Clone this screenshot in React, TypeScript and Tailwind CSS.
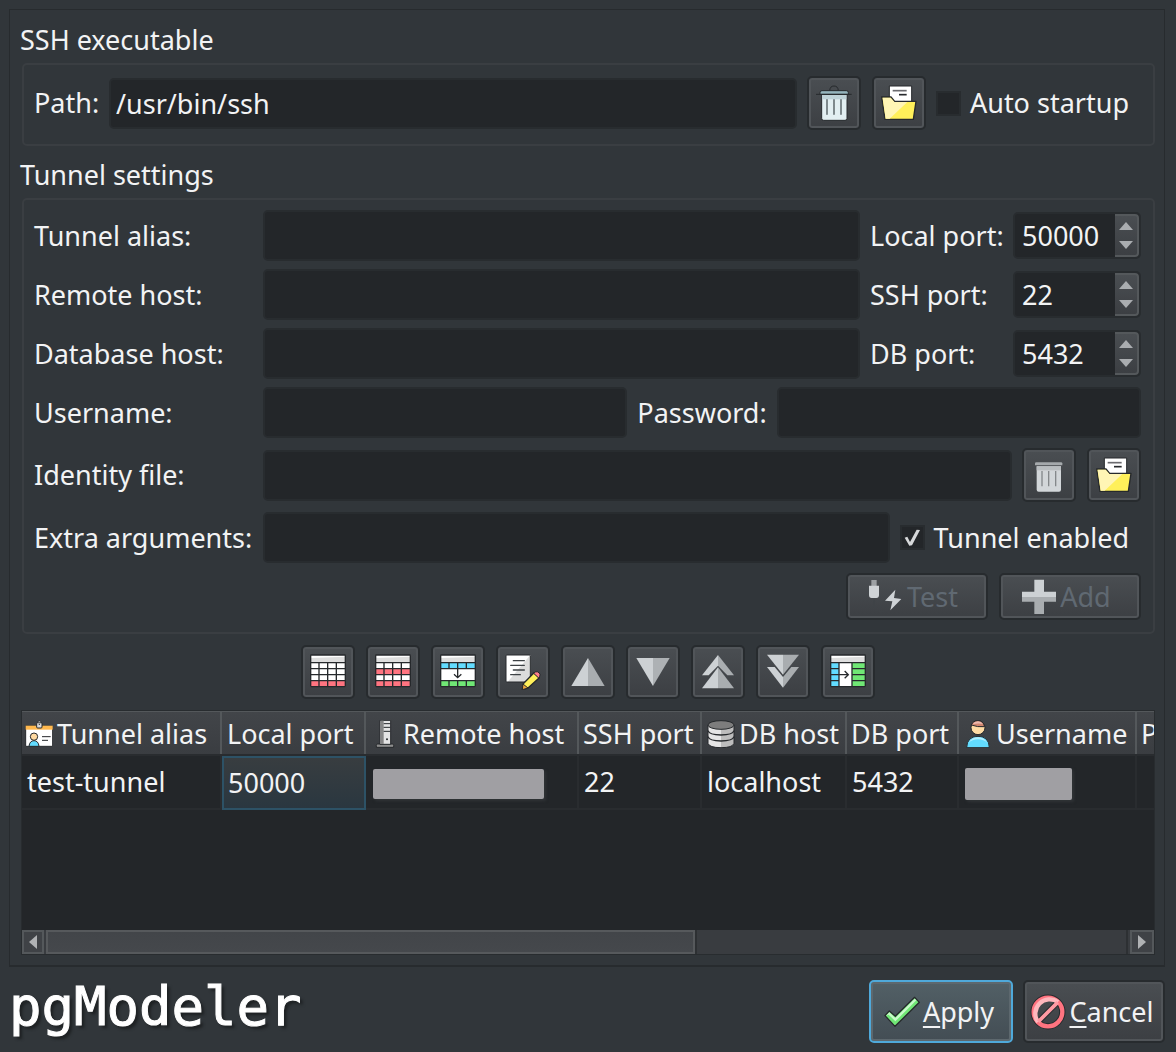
import type { ButtonHTMLAttributes, ReactNode } from "react";
import { clsx } from "clsx";

const DARK = "#26292c";

/* ---------- icons ---------- */

interface IconProps {
  children: ReactNode;
}

function Icon({ children }: IconProps) {
  return (
    <svg viewBox="0 0 108 108" className="size-9 shrink-0" aria-hidden="true">
      {children}
    </svg>
  );
}

function HeaderIcon({ children }: IconProps) {
  return (
    <svg viewBox="0 0 84 84" className="size-7 shrink-0" aria-hidden="true">
      {children}
    </svg>
  );
}

function TrashIcon({ disabled = false }: { disabled?: boolean }) {
  if (disabled) {
    return (
      <Icon>
        <path d="M12 25V19q0-3 4-3H90q4 0 4 3v6z" fill="#a5a9ac" />
        <path d="M17 28H90V98q0 6-6 6H23q-6 0-6-6z" fill="#d2d6d9" />
        <path d="M17 28H90V40H17z" fill="#b9bdc0" />
        <path d="M33 42V88M53 42V88M74 42V88" stroke="#84888b" strokeWidth="4" />
      </Icon>
    );
  }
  return (
    <Icon>
      <path d="M41 17q1-14 13-14t13 14" fill="none" stroke={DARK} strokeWidth="3" />
      <path d="M17 28H93V100q0 6-6 6H23q-6 0-6-6z" fill="#e2eff2" stroke={DARK} strokeWidth="3" />
      <path d="M19 29H91V43H19z" fill="#bfd3d8" />
      <path d="M12 28V23q0-6 6-6H91q6 0 6 6v5z" fill="#95b5bd" stroke={DARK} strokeWidth="3" />
      <path d="M0 28H107" stroke={DARK} strokeWidth="3" />
      <path d="M33 44V88M54 44V88M75 44V88" stroke="#4d575b" strokeWidth="4" strokeLinecap="round" />
    </Icon>
  );
}

function FolderIcon() {
  return (
    <Icon>
      <path d="M25 3H92V60H25z" fill="#fff" stroke={DARK} strokeWidth="3" />
      <path d="M35 17H77" stroke="#6b6b6f" strokeWidth="5" />
      <path d="M54 29H77" stroke={DARK} strokeWidth="5" />
      <path d="M2 36H30L41 49H105L97 103H12z" fill="#fff05a" stroke={DARK} strokeWidth="4" strokeLinejoin="round" />
      <path d="M5 38H29L40 51H79L26 101H14z" fill="#fff5b5" />
    </Icon>
  );
}

const GRID_LINES = "M2 26H106M2 44H106M2 62H106M2 80H106M27 26V98M53 26V98M79 26V98";

function TableFrame({ children, lines = GRID_LINES }: { children?: ReactNode; lines?: string }) {
  return (
    <Icon>
      <path d="M2 3H106V98H2z" fill="#fff" />
      <path d="M2 24V12L106 8V24z" fill="#dedede" />
      {children}
      <path d={lines} stroke={DARK} strokeWidth="4" fill="none" />
      <rect x="2" y="3" width="104" height="95" rx="2" fill="none" stroke={DARK} strokeWidth="4" />
    </Icon>
  );
}

function TableRemoveAllIcon() {
  return (
    <TableFrame>
      <path d="M2 80H106V98H2z" fill="#ff7480" />
    </TableFrame>
  );
}

function TableRemoveRowsIcon() {
  return (
    <TableFrame>
      <path d="M2 44H106V62H2zM2 80H106V98H2z" fill="#ff7480" />
    </TableFrame>
  );
}

function TableDuplicateIcon() {
  return (
    <TableFrame lines="M2 26H106M2 44H106M2 80H106M27 26V44M53 26V44M79 26V44M27 80V98M53 80V98M79 80V98M53 44V70M42 61L53 71L64 61">
      <path d="M2 26H106V44H2z" fill="#62dcff" />
      <path d="M2 80H106V98H2z" fill="#70e775" />
    </TableFrame>
  );
}

function TableColumnsIcon() {
  return (
    <TableFrame lines="M2 26H106M27 26V98M66 26V98M2 44H27M2 62H54M2 80H27M66 44H106M66 62H106M66 80H106M44 51L55 62L44 73">
      <path d="M2 26H27V98H2z" fill="#62dcff" />
      <path d="M66 26H106V98H66z" fill="#70e775" />
    </TableFrame>
  );
}

function EditIcon() {
  return (
    <Icon>
      <path d="M3 3H76V84H3z" fill="#fff" />
      <path d="M76 3V84H8z" fill="#dcdcdc" />
      <rect x="3" y="3" width="73" height="81" rx="3" fill="none" stroke={DARK} strokeWidth="3" />
      <path d="M25 20H58M17 34H58M25 48H58M17 62H46" stroke="#3e4246" strokeWidth="4" strokeLinecap="round" />
      <path d="M54 90L87 56L103 71L69 102L52 107z" fill="#fff05a" stroke={DARK} strokeWidth="4" strokeLinejoin="round" />
      <path d="M54 90L69 102L52 107z" fill="#f0a63c" stroke={DARK} strokeWidth="3" strokeLinejoin="round" />
      <path d="M86 58L91 54q6-3 12 3q4 5 1 10L101 72z" fill="#ff7f8a" stroke={DARK} strokeWidth="3" />
    </Icon>
  );
}

function UpIcon() {
  return (
    <Icon>
      <path d="M54 12L4 96H54z" fill="#cdd1d4" />
      <path d="M54 12L104 96H54z" fill="#a9adb0" />
    </Icon>
  );
}

function DownIcon() {
  return (
    <Icon>
      <path d="M4 12H54V96z" fill="#cdd1d4" />
      <path d="M54 12H104L54 96z" fill="#adb1b4" />
    </Icon>
  );
}

function FirstIcon() {
  return (
    <Icon>
      <path d="M54 3L6 64H26L54 35z" fill="#cdd1d4" />
      <path d="M54 3L102 64H82L54 35z" fill="#a9adb0" />
      <path d="M54 40L6 103H54z" fill="#cdd1d4" />
      <path d="M54 40L102 103H54z" fill="#a9adb0" />
    </Icon>
  );
}

function LastIcon() {
  return (
    <Icon>
      <path d="M6 2H54V62z" fill="#cdd1d4" />
      <path d="M54 2H102L54 62z" fill="#a9adb0" />
      <path d="M6 39H29L54 69V101z" fill="#cdd1d4" />
      <path d="M102 39H79L54 69V101z" fill="#a9adb0" />
    </Icon>
  );
}

function TestIcon() {
  return (
    <Icon>
      <path d="M10 3H26V21H10z" fill="#9da1a4" />
      <path d="M3 20H33V48q0 9-8 9H11q-8 0-8-9z" fill="#cfd3d6" />
      <path d="M18 60V76Q18 98 40 97T62 84" stroke="#3f4347" strokeWidth="3" fill="none" />
      <path d="M82 32L51 65L73 67L67 94L100 60L78 57z" fill="#cfd3d6" />
    </Icon>
  );
}

function AddIcon() {
  return (
    <Icon>
      <path d="M40 2H69V38H105V54H3V38H40z" fill="#cdd1d4" />
      <path d="M3 54H105V68H69V105H40V68H3z" fill="#a9adb0" />
    </Icon>
  );
}

function ApplyIcon() {
  return (
    <Icon>
      <path d="M3 65L16 51L34 67L92 10L106 25L33 97z" fill="#70e775" stroke={DARK} strokeWidth="4" strokeLinejoin="round" />
      <path d="M6 65L16 55L34 72L92 14L97 19L34 82L14 62z" fill="#c9f9ca" />
    </Icon>
  );
}

function CancelIcon() {
  return (
    <Icon>
      <circle cx="54" cy="54" r="43" fill="none" stroke={DARK} strokeWidth="19" />
      <path d="M25 83L83 25" stroke={DARK} strokeWidth="17" />
      <circle cx="54" cy="54" r="43" fill="none" stroke="#ff7480" strokeWidth="13" />
      <path d="M24 84A43 43 0 0 1 84 24" fill="none" stroke="#ffb7bd" strokeWidth="13" />
      <path d="M25 83L83 25" stroke="#ff9aa3" strokeWidth="11" />
    </Icon>
  );
}

function BadgeIcon() {
  return (
    <HeaderIcon>
      <path d="M2 17H83V79H2z" fill="#fff" stroke={DARK} strokeWidth="3" />
      <path d="M2 17H83V29H2z" fill="#ffb84d" />
      <rect x="35" y="8" width="16" height="16" rx="3" fill="#d9d9d9" stroke={DARK} strokeWidth="3" />
      <path d="M38 8q0-5 5-5t5 5z" fill="#d9d9d9" stroke={DARK} strokeWidth="2" />
      <circle cx="43" cy="13" r="2" fill={DARK} />
      <path d="M12 79q2-17 15-17t15 17z" fill="#62dcff" stroke={DARK} strokeWidth="3" />
      <circle cx="27" cy="50" r="11" fill="#ffd9a0" stroke={DARK} strokeWidth="3" />
      <path d="M51 50H77M51 61H69" stroke={DARK} strokeWidth="3" />
    </HeaderIcon>
  );
}

function ServerIcon() {
  return (
    <HeaderIcon>
      <path d="M16 82V76q0-4 4-4H64q4 0 4 4v6z" fill="#8d8d8d" stroke={DARK} strokeWidth="3" />
      <path d="M27 1H59V73H27z" fill="#e4e4e4" stroke={DARK} strokeWidth="3" />
      <path d="M28 2H38V72H28z" fill="#858585" />
      <path d="M38 11H58M38 22H58M38 34H58" stroke={DARK} strokeWidth="3" />
      <circle cx="48" cy="58" r="3" fill={DARK} />
    </HeaderIcon>
  );
}

function DatabaseIcon() {
  return (
    <HeaderIcon>
      <path d="M3 15V70q4 13 39 13t39-13V15z" fill="#e6e6e6" />
      <path d="M42 15H81V70q-4 13-39 13z" fill="#bdbdbd" />
      <path d="M3 32q4 13 39 13t39-13M3 50q4 13 39 13t39-13" fill="none" stroke={DARK} strokeWidth="4" />
      <path d="M3 15V70q4 13 39 13t39-13V15" fill="none" stroke={DARK} strokeWidth="3" />
      <ellipse cx="42" cy="15" rx="39" ry="13" fill="#7d7d7d" stroke={DARK} strokeWidth="3" />
    </HeaderIcon>
  );
}

function UserIcon() {
  return (
    <HeaderIcon>
      <path d="M8 83q1-34 34-34t34 34z" fill="#62dcff" stroke={DARK} strokeWidth="3" />
      <path d="M14 69q8-17 28-17t28 17q-10-11-28-11t-28 11z" fill="#b4efff" />
      <circle cx="42" cy="23" r="21" fill="#ffdca4" stroke={DARK} strokeWidth="3" />
      <path d="M22 15q5-13 20-13t20 18q-22 2-40-5z" fill="#d0866f" stroke={DARK} strokeWidth="3" />
      <path d="M26 13q6-9 16-9t15 8q-14-4-31 1z" fill="#edb9ae" />
    </HeaderIcon>
  );
}

/* ---------- controls ---------- */

interface PushButtonProps extends ButtonHTMLAttributes<HTMLButtonElement> {
  className?: string;
}

function PushButton({ className, children, ...props }: PushButtonProps) {
  return (
    <button
      type="button"
      className={clsx(
        "flex shrink-0 items-center justify-center gap-[3px] rounded-[5px] border-2 border-[#272b2e] bg-linear-to-b from-[#4a4e52] to-[#3c3f43] inset-ring-2 inset-ring-[#515559] disabled:text-[#606972]",
        className
      )}
      {...props}
    >
      {children}
    </button>
  );
}

function IconButton({ label, children, disabled }: { label: string; children: ReactNode; disabled?: boolean }) {
  return (
    <PushButton aria-label={label} disabled={disabled} className="size-[54px]">
      {children}
    </PushButton>
  );
}

interface TextFieldProps {
  id: string;
  value?: string;
  type?: string;
}

function TextField({ id, value = "", type = "text" }: TextFieldProps) {
  return (
    <input
      id={id}
      type={type}
      defaultValue={value}
      className="h-[51px] min-w-0 flex-1 rounded-[5px] border-2 border-[#282c2f] bg-[#232629] px-[5px] outline-none"
    />
  );
}

function PortField({ id, label, value }: { id: string; label: string; value: string }) {
  return (
    <>
      <label htmlFor={id} className="w-[133px] shrink-0 whitespace-nowrap">
        {label}
      </label>
      <div className="flex h-[47px] w-[128px] shrink-0 rounded-[5px] border-2 border-[#282c2f] bg-[#232629]">
        <input
          id={id}
          inputMode="numeric"
          defaultValue={value}
          className="w-[100px] min-w-0 bg-transparent pl-[7px] outline-none"
        />
        <div className="flex flex-1 flex-col rounded-r-[4px] border-2 border-l-0 border-[#54585b] bg-linear-to-b from-[#4a4e52] to-[#3c3f43]">
          <button type="button" aria-label={`Increase ${id}`} className="flex flex-1 items-center justify-center">
            <svg viewBox="0 0 14 8" className="h-2 w-[14px]" aria-hidden="true">
              <path d="M7 0L14 8H0z" fill="#aaadb0" />
            </svg>
          </button>
          <button type="button" aria-label={`Decrease ${id}`} className="flex flex-1 items-center justify-center">
            <svg viewBox="0 0 14 8" className="h-2 w-[14px]" aria-hidden="true">
              <path d="M7 8L0 0H14z" fill="#aaadb0" />
            </svg>
          </button>
        </div>
      </div>
    </>
  );
}

function CheckField({ label, checked = false }: { label: string; checked?: boolean }) {
  return (
    <label className="flex shrink-0 items-center gap-[9px] pr-3 whitespace-nowrap">
      <span className="grid size-[25px]">
        <input
          type="checkbox"
          defaultChecked={checked}
          className="peer col-start-1 row-start-1 size-[25px] appearance-none border-2 border-[#282c2f] bg-[#232629]"
        />
        <svg
          viewBox="0 0 75 75"
          className="pointer-events-none col-start-1 row-start-1 hidden size-[25px] peer-checked:block"
          aria-hidden="true"
        >
          <path d="M14 38L22 35L30 51L50 14L60 15L36 61L28 62z" fill="#d6d8da" />
        </svg>
      </span>
      {label}
    </label>
  );
}

function GroupBox({ title, children, className }: { title: string; children: ReactNode; className?: string }) {
  return (
    <fieldset className="min-w-0">
      <legend className="h-[42px] leading-[38px]">{title}</legend>
      <div className={clsx("ml-[2px] rounded-[5px] border-2 border-[#3a3e42] pr-[12px] pl-[10px]", className)}>
        {children}
      </div>
    </fieldset>
  );
}

/* ---------- tunnel list ---------- */

const columns = [
  { name: "Tunnel alias", width: 200, icon: <BadgeIcon />, pad: "pl-[3px]" },
  { name: "Local port", width: 144, pad: "pl-[5px]" },
  { name: "Remote host", width: 213, icon: <ServerIcon />, pad: "pl-[5px]" },
  { name: "SSH port", width: 123, pad: "pl-[4px]" },
  { name: "DB host", width: 145, icon: <DatabaseIcon />, pad: "pl-[5px]" },
  { name: "DB port", width: 112, pad: "pl-[4px]" },
  { name: "Username", width: 178, icon: <UserIcon />, pad: "pl-[5px]" },
  { name: "Password", width: 150, pad: "pl-[4px]" },
];

const cellClass = "h-[54px] border-r-2 border-b-2 border-[#292c2f] pl-[5px]";

function TunnelTable() {
  return (
    <div className="ml-px flex min-h-[245px] flex-1 flex-col border border-[#282c2f] bg-[#232629]">
      <div className="flex-1 overflow-hidden">
        <table className="w-[1265px] table-fixed border-separate border-spacing-0 text-left">
          <colgroup>
            {columns.map((column) => (
              <col key={column.name} style={{ width: column.width }} />
            ))}
          </colgroup>
          <thead>
            <tr>
              {columns.map((column) => (
                <th key={column.name} className="border-b-2 border-[#292c2f] p-0 font-normal whitespace-nowrap">
                  <div
                    className={clsx(
                      "flex h-[43px] items-center gap-1 border-t border-r-2 border-[#54585b] bg-linear-to-b from-[#424549] to-[#3a3d41] pt-px",
                      column.pad
                    )}
                  >
                    {column.icon}
                    {column.name}
                  </div>
                </th>
              ))}
            </tr>
          </thead>
          <tbody>
            <tr>
              <td className={cellClass}>test-tunnel</td>
              <td className="h-[54px] border-2 border-[#2d5266] bg-linear-to-b from-[#383d40] to-[#2a3740] pl-[4px]">
                50000
              </td>
              <td className={cellClass}>
                <div className="mt-1 ml-[2px] h-[30px] w-[171px] rounded-xs bg-[#a09fa3] shadow-[2px_2px_3px_#303336]" />
              </td>
              <td className={cellClass}>22</td>
              <td className={cellClass}>localhost</td>
              <td className={cellClass}>5432</td>
              <td className={cellClass}>
                <div className="mt-1 ml-px h-8 w-[107px] rounded-xs bg-[#a09fa3] shadow-[2px_2px_3px_#303336]" />
              </td>
              <td className={cellClass} />
            </tr>
          </tbody>
        </table>
      </div>

      {/* horizontal scroll bar */}
      <div className="flex h-6 gap-[2px] bg-[#393c40]">
        <button
          type="button"
          aria-label="Scroll left"
          className="flex w-[22px] items-center justify-center border-2 border-[#54585b] bg-[#3f4246]"
        >
          <svg viewBox="0 0 8 14" className="h-[14px] w-2" aria-hidden="true">
            <path d="M0 7L8 0V14z" fill="#b0b2b4" />
          </svg>
        </button>
        <div className="flex flex-1">
          <div className="w-[60%] border-2 border-[#56595c] bg-linear-to-b from-[#424549] to-[#45484c]" />
          <div className="flex-1 border-x-2 border-[#2d3033]" />
        </div>
        <button
          type="button"
          aria-label="Scroll right"
          className="flex w-6 items-center justify-center border-2 border-[#54585b] bg-[#3f4246]"
        >
          <svg viewBox="0 0 8 14" className="h-[14px] w-2" aria-hidden="true">
            <path d="M8 7L0 0V14z" fill="#b0b2b4" />
          </svg>
        </button>
      </div>
    </div>
  );
}

/* ---------- page ---------- */

export default function App() {
  return (
    <div className="flex min-h-screen flex-col bg-[#31363a] pt-[9px] pr-[11px] pb-[10px] pl-[9px] font-['Noto_Sans',sans-serif] text-[27px] leading-[38px] text-[#f2f3f4]">
      <main className="flex flex-1 flex-col border border-b-2 border-[#272b2e] pt-[11px] pr-[9px] pb-[10px] pl-[10px]">
        <GroupBox title="SSH executable" className="h-[83px] pt-[11px]">
          <div className="flex items-center">
            <label htmlFor="path" className="w-[75px] shrink-0">
              Path:
            </label>
            <TextField id="path" value="/usr/bin/ssh" />
            <div className="mx-[10px] flex gap-[11px]">
              <IconButton label="Clear path">
                <TrashIcon />
              </IconButton>
              <IconButton label="Select executable">
                <FolderIcon />
              </IconButton>
            </div>
            <CheckField label="Auto startup" />
          </div>
        </GroupBox>

        <div className="mt-[10px]">
          <GroupBox title="Tunnel settings" className="flex flex-col gap-[10px] pt-[10px] pb-[12px]">
            <div className="flex flex-col gap-[8px]">
              <div className="flex items-center gap-[10px]">
                <label htmlFor="alias" className="w-[219px] shrink-0">
                  Tunnel alias:
                </label>
                <TextField id="alias" />
                <PortField id="local-port" label="Local port:" value="50000" />
              </div>
              <div className="flex items-center gap-[10px]">
                <label htmlFor="remote-host" className="w-[219px] shrink-0">
                  Remote host:
                </label>
                <TextField id="remote-host" />
                <PortField id="ssh-port" label="SSH port:" value="22" />
              </div>
              <div className="flex items-center gap-[10px]">
                <label htmlFor="db-host" className="w-[219px] shrink-0">
                  Database host:
                </label>
                <TextField id="db-host" />
                <PortField id="db-port" label="DB port:" value="5432" />
              </div>
              <div className="flex items-center gap-[10px]">
                <label htmlFor="username" className="w-[219px] shrink-0">
                  Username:
                </label>
                <TextField id="username" />
                <label htmlFor="password">Password:</label>
                <TextField id="password" type="password" />
              </div>
            </div>

            <div className="flex items-center gap-[10px]">
              <label htmlFor="identity" className="w-[219px] shrink-0">
                Identity file:
              </label>
              <TextField id="identity" />
              <div className="flex gap-[11px]">
                <IconButton label="Clear identity file" disabled>
                  <TrashIcon disabled />
                </IconButton>
                <IconButton label="Select identity file">
                  <FolderIcon />
                </IconButton>
              </div>
            </div>

            <div className="flex items-center gap-[10px]">
              <label htmlFor="extra" className="w-[219px] shrink-0 whitespace-nowrap">
                Extra arguments:
              </label>
              <TextField id="extra" />
              <CheckField label="Tunnel enabled" checked />
            </div>

            <div className="flex justify-end gap-[11px]">
              <PushButton className="h-[47px] w-[142px] pr-2" disabled>
                <TestIcon />
                Test
              </PushButton>
              <PushButton className="h-[47px] w-[142px] pr-2" disabled>
                <AddIcon />
                Add
              </PushButton>
            </div>
          </GroupBox>
        </div>

        <div className="my-[11px] flex justify-center gap-[11px]">
          <IconButton label="Remove all tunnels">
            <TableRemoveAllIcon />
          </IconButton>
          <IconButton label="Remove tunnel">
            <TableRemoveRowsIcon />
          </IconButton>
          <IconButton label="Duplicate tunnel">
            <TableDuplicateIcon />
          </IconButton>
          <IconButton label="Edit tunnel">
            <EditIcon />
          </IconButton>
          <IconButton label="Move up">
            <UpIcon />
          </IconButton>
          <IconButton label="Move down">
            <DownIcon />
          </IconButton>
          <IconButton label="Move to first">
            <FirstIcon />
          </IconButton>
          <IconButton label="Move to last">
            <LastIcon />
          </IconButton>
          <IconButton label="Resize columns">
            <TableColumnsIcon />
          </IconButton>
        </div>

        <TunnelTable />
      </main>

      <footer className="flex items-center gap-[10px] pt-[13px]">
        <div className="mr-auto pb-[10px] font-['DejaVu_Sans_Mono',monospace] text-[54px] leading-[53px] text-white text-shadow-[3px_3px_3px_#1d2022] [-webkit-text-stroke:1px_white]">
          pgModeler
        </div>
        <button
          type="button"
          className="flex h-[63px] w-[144px] items-center justify-center gap-[3px] rounded-[5px] border-2 border-[#4fa9da] bg-linear-to-b from-[#526066] to-[#434d54] pr-1 inset-ring-2 inset-ring-[#5d686e]"
        >
          <ApplyIcon />
          <span>
            <span className="underline decoration-2 underline-offset-4">A</span>pply
          </span>
        </button>
        <PushButton className="h-[63px] w-[142px] pr-1">
          <CancelIcon />
          <span>
            <span className="underline decoration-2 underline-offset-4">C</span>ancel
          </span>
        </PushButton>
      </footer>
    </div>
  );
}
